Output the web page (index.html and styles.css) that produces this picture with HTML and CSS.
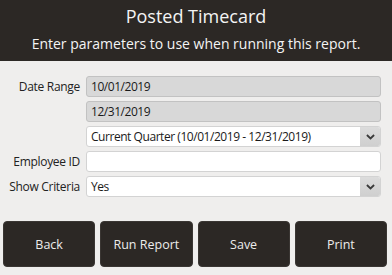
FILE: index.html
```html
<!DOCTYPE html>
<html>
<head>
<meta charset="utf-8">
<link rel="stylesheet" href="styles.css">
</head>
<body>
<div class="page">
  <header class="header">
    <h1 class="title">Posted Timecard</h1>
    <p class="subtitle">Enter parameters to use when running this report.</p>
  </header>
  <main class="form">
    <div class="row">
      <label class="label">Date Range</label>
      <div class="field field-disabled">10/01/2019</div>
    </div>
    <div class="row">
      <span class="label"></span>
      <div class="field field-disabled">12/31/2019</div>
    </div>
    <div class="row">
      <span class="label"></span>
      <div class="field field-select">
        <span class="select-value">Current Quarter (10/01/2019 - 12/31/2019)</span>
        <span class="select-btn"><svg class="chev" viewBox="0 0 10 6" width="9" height="6"><path d="M1 0.8 L5 4.6 L9 0.8" fill="none" stroke="#3a3a3a" stroke-width="2"/></svg></span>
      </div>
    </div>
    <div class="row">
      <label class="label">Employee ID</label>
      <div class="field"></div>
    </div>
    <div class="row">
      <label class="label">Show Criteria</label>
      <div class="field field-select">
        <span class="select-value">Yes</span>
        <span class="select-btn"><svg class="chev" viewBox="0 0 10 6" width="9" height="6"><path d="M1 0.8 L5 4.6 L9 0.8" fill="none" stroke="#3a3a3a" stroke-width="2"/></svg></span>
      </div>
    </div>
  </main>
  <footer class="actions">
    <button class="btn">Back</button>
    <button class="btn">Run Report</button>
    <button class="btn">Save</button>
    <button class="btn">Print</button>
  </footer>
</div>
</body>
</html>
```
FILE: styles.css
```css
html, body {
  margin: 0;
  padding: 0;
}
body {
  width: 392px;
  height: 275px;
  overflow: hidden;
  background: #efeeed;
  font-family: "Open Sans", "Noto Sans", sans-serif;
  color: #1e1e1e;
}
.page {
  display: flex;
  flex-direction: column;
  height: 275px;
}
.header {
  background: #2c2825;
  color: #f4f4f4;
  height: 61px;
  box-sizing: border-box;
  padding-top: 4px;
  text-align: center;
}
.title {
  margin: 0;
  font-size: 18px;
  font-weight: 400;
  line-height: 24px;
}
.subtitle {
  margin: 0;
  margin-top: 6px;
  font-size: 14px;
  line-height: 20px;
}
.form {
  display: flex;
  flex-direction: column;
  gap: 4px;
  padding: 15px 11px 0 0;
}
.row {
  display: grid;
  grid-template-columns: 80px 1fr;
  column-gap: 6px;
  align-items: center;
}
.label {
  text-align: right;
  font-size: 12px;
  letter-spacing: -0.3px;
  color: #222;
  white-space: nowrap;
}
.field {
  height: 21px;
  box-sizing: border-box;
  border: 1px solid #d3d3d3;
  border-radius: 3px;
  background: #ffffff;
  font-size: 12px;
  letter-spacing: -0.45px;
  line-height: 19px;
  padding-left: 4px;
  color: #1a1a1a;
}
.field-disabled {
  background: #d8d8d8;
  border-color: #c2c2c2;
}
.field-select {
  display: flex;
  padding-left: 0;
}
.select-value {
  flex: 1;
  padding-left: 4px;
}
.select-btn {
  width: 20px;
  background: linear-gradient(#dcdcdc, #cfcfcf);
  border-radius: 0 2px 2px 0;
  display: flex;
  align-items: center;
  justify-content: center;
}
.actions {
  display: flex;
  gap: 5px;
  padding: 0 5px 0 3px;
  margin-top: 24px;
}
.btn {
  flex: 1;
  height: 46px;
  background: #2c2825;
  color: #ececec;
  border: 1px solid #3a3633;
  border-radius: 4px;
  font-family: inherit;
  font-size: 12.5px;
}
```
